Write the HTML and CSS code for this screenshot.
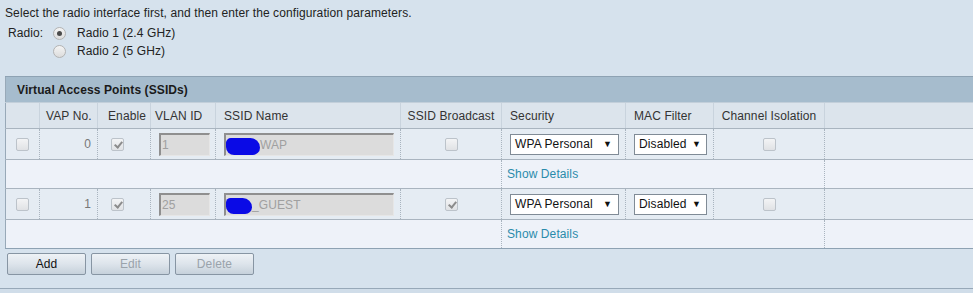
FILE: index.html
```html
<!DOCTYPE html>
<html>
<head>
<meta charset="utf-8">
<link rel="stylesheet" href="styles.css">
</head>
<body>
<div class="page">
  <p class="intro">Select the radio interface first, and then enter the configuration parameters.</p>
  <div class="radio-group">
    <span class="radio-label">Radio:</span>
    <div class="radio-options">
      <div class="radio-opt"><span class="radio checked"></span><span>Radio 1 (2.4 GHz)</span></div>
      <div class="radio-opt"><span class="radio"></span><span>Radio 2 (5 GHz)</span></div>
    </div>
  </div>

  <div class="table-wrap">
    <table class="vap">
      <colgroup>
        <col class="c-sel"><col class="c-no"><col class="c-en"><col class="c-vlan"><col class="c-ssid"><col class="c-bc"><col class="c-sec"><col class="c-mac"><col class="c-iso"><col class="c-rest">
      </colgroup>
      <thead>
        <tr class="title-row"><th colspan="10">Virtual Access Points (SSIDs)</th></tr>
        <tr class="col-row">
          <th></th>
          <th class="right">VAP No.</th>
          <th class="t-en">Enable</th>
          <th class="t-vlan">VLAN ID</th>
          <th class="t-left">SSID Name</th>
          <th class="t-center">SSID Broadcast</th>
          <th class="t-left">Security</th>
          <th class="t-left">MAC Filter</th>
          <th class="t-center">Channel Isolation</th>
          <th></th>
        </tr>
      </thead>
      <tbody>
        <tr class="data-row">
          <td class="center"><span class="cb"></span></td>
          <td class="num">0</td>
          <td class="en"><span class="cb checked"></span></td>
          <td class="vlan"><div class="field small">1</div></td>
          <td class="ssid"><div class="field wide"><span class="blob b1"></span>WAP</div></td>
          <td class="center"><span class="cb"></span></td>
          <td class="sec"><div class="select s-sec"><span>WPA Personal</span><span class="arrow">&#9660;</span></div></td>
          <td class="mac"><div class="select s-mac"><span>Disabled</span><span class="arrow">&#9660;</span></div></td>
          <td class="center"><span class="cb"></span></td>
          <td></td>
        </tr>
        <tr class="detail-row">
          <td colspan="6" class="blank"></td>
          <td colspan="3" class="details"><a class="link">Show Details</a></td>
          <td></td>
        </tr>
        <tr class="data-row">
          <td class="center"><span class="cb"></span></td>
          <td class="num">1</td>
          <td class="en"><span class="cb checked"></span></td>
          <td class="vlan"><div class="field small">25</div></td>
          <td class="ssid"><div class="field wide"><span class="blob b2"></span>_GUEST</div></td>
          <td class="center"><span class="cb checked"></span></td>
          <td class="sec"><div class="select s-sec"><span>WPA Personal</span><span class="arrow">&#9660;</span></div></td>
          <td class="mac"><div class="select s-mac"><span>Disabled</span><span class="arrow">&#9660;</span></div></td>
          <td class="center"><span class="cb"></span></td>
          <td></td>
        </tr>
        <tr class="detail-row last">
          <td colspan="6" class="blank"></td>
          <td colspan="3" class="details"><a class="link">Show Details</a></td>
          <td></td>
        </tr>
      </tbody>
    </table>
  </div>

  <div class="buttons">
    <button class="btn">Add</button>
    <button class="btn disabled">Edit</button>
    <button class="btn disabled">Delete</button>
  </div>
  <div class="footer-line"></div>
</div>
</body>
</html>
```
FILE: styles.css
```css
html, body {
  margin: 0;
  padding: 0;
  overflow: hidden;
  background: #d6e2ed;
}
body {
  font-family: "Liberation Sans", Arial, sans-serif;
  font-size: 12px;
  letter-spacing: 0.1px;
  color: #222;
  width: 973px;
  height: 293px;
}
.page {
  padding-top: 6px;
}
.intro {
  margin: 0 0 4px 5px;
  line-height: 14px;
  color: #222;
}
.radio-group {
  display: flex;
  margin-left: 8px;
}
.radio-label {
  line-height: 18px;
  width: 45px;
}
.radio-options {
  display: flex;
  flex-direction: column;
}
.radio-opt {
  display: flex;
  align-items: center;
  height: 18px;
}
.radio {
  width: 11px;
  height: 11px;
  border: 1px solid #b3b3b3;
  border-radius: 50%;
  background: linear-gradient(#f4f4f4, #dcdcdc);
  margin-right: 11px;
  box-sizing: content-box;
  display: inline-flex;
  align-items: center;
  justify-content: center;
}
.radio.checked::after {
  content: "";
  width: 5px;
  height: 5px;
  border-radius: 50%;
  background: #4a4a4a;
}

.table-wrap {
  margin-top: 16px;
  margin-left: 5px;
  width: 1000px;
}
.vap {
  border-collapse: collapse;
  table-layout: fixed;
  width: 1000px;
  border-left: 1px solid #98a9b8;
}
.c-sel { width: 34px; }
.c-no { width: 58px; }
.c-en { width: 53px; }
.c-vlan { width: 65px; }
.c-ssid { width: 185px; }
.c-bc { width: 101px; }
.c-sec { width: 124px; }
.c-mac { width: 88px; }
.c-iso { width: 111px; }
.c-rest { width: auto; }

.title-row th {
  background: #a6bccd;
  border-top: 1px solid #8ea2b3;
  height: 25px;
  padding: 0 0 0 11px;
  text-align: left;
  font-weight: bold;
  color: #1a1a1a;
}
.col-row th {
  background: #dce4ec;
  height: 25px;
  font-weight: normal;
  color: #333;
  padding: 0 6px;
  border-left: 1px solid #c9d3dd;
  border-bottom: 1px solid #a9b4bf;
  border-top: 1px solid #c3cfda;
  white-space: nowrap;
}
.col-row th:first-child { border-left: none; }
.col-row th.right { text-align: right; }
.col-row th.t-left { text-align: left; padding-left: 8px; }
.col-row th.t-center { text-align: center; }
.col-row th.t-en { text-align: left; padding-left: 10px; }
.col-row th.t-vlan { text-align: left; padding-left: 4px; }

.data-row td {
  background: #e5ecf3;
  height: 30px;
  padding: 0;
  border-left: 1px dotted #a9b4bf;
  border-bottom: 1px solid #a9b4bf;
  color: #777;
}
.data-row td:first-child { border-left: none; }
.detail-row td {
  background: #eef2f9;
  height: 28px;
  padding: 0;
  border-bottom: 1px solid #a9b4bf;
}
.detail-row td.details {
  border-left: 1px dotted #a9b4bf;
  border-right: 1px dotted #a9b4bf;
  padding-left: 5px;
}
.detail-row.last td {
  border-bottom: 1px solid #8ea2b3;
}
.link {
  color: #2a8bab;
  cursor: pointer;
}

td.center { text-align: center; }
td.num { text-align: right; padding-right: 6px; }
td.en { padding-left: 13px; }
td.vlan { padding-left: 8px; }
td.ssid { padding-left: 8px; }
td.sec { padding-left: 8px; }
td.mac { padding-left: 8px; }

.cb {
  display: inline-block;
  width: 11px;
  height: 11px;
  border: 1px solid #bcc3ca;
  border-radius: 2px;
  background: linear-gradient(#f3f4f5, #e0e2e5);
  vertical-align: middle;
  position: relative;
}
.cb.checked::after {
  content: "";
  position: absolute;
  left: 4px;
  top: 1px;
  width: 3px;
  height: 6px;
  border-right: 2px solid #8c8c8c;
  border-bottom: 2px solid #8c8c8c;
  transform: rotate(40deg);
}

.field {
  box-sizing: border-box;
  height: 23px;
  background: #dcdcdc;
  border-top: 2px solid #8f8f8f;
  border-left: 2px solid #8f8f8f;
  border-right: 1px solid #e6e6e6;
  border-bottom: 1px solid #e6e6e6;
  color: #a0a0a0;
  line-height: 20px;
  padding-left: 1px;
  display: flex;
  align-items: center;
  white-space: nowrap;
}
.field.small { width: 51px; }
.field.wide { width: 170px; }
.blob {
  display: inline-block;
  background: #0a0ae6;
  border-radius: 6px 12px 9px 10px;
  margin-left: -1px;
}
.blob.b1 {
  width: 34px;
  height: 17px;
  margin-top: 4px;
}
.blob.b2 {
  width: 26px;
  height: 16px;
  margin-top: 2px;
}

.select {
  box-sizing: border-box;
  height: 21px;
  background: #fff;
  border: 1px solid #808b96;
  display: flex;
  align-items: center;
  justify-content: space-between;
  padding: 0 6px 0 4px;
  color: #111;
  white-space: nowrap;
}
.s-sec { width: 109px; }
.s-mac { width: 73px; padding-right: 5px; }
.arrow {
  font-size: 9px;
  color: #111;
}

.buttons {
  display: flex;
  gap: 5px;
  margin: 4px 0 0 7px;
}
.btn {
  width: 79px;
  height: 22px;
  font-family: "Liberation Sans", Arial, sans-serif;
  font-size: 12px;
  letter-spacing: 0.1px;
  color: #111;
  border: 1px solid #8795a3;
  border-radius: 2px;
  background: linear-gradient(#eef2f6 0%, #dde4eb 50%, #c6d1db 100%);
  padding: 0;
}
.btn.disabled { color: #9aa3ab; }
.footer-line {
  margin-top: 13px;
  border-top: 1px solid #97a8b8;
  height: 6px;
  background: #d0dde9;
}
```
